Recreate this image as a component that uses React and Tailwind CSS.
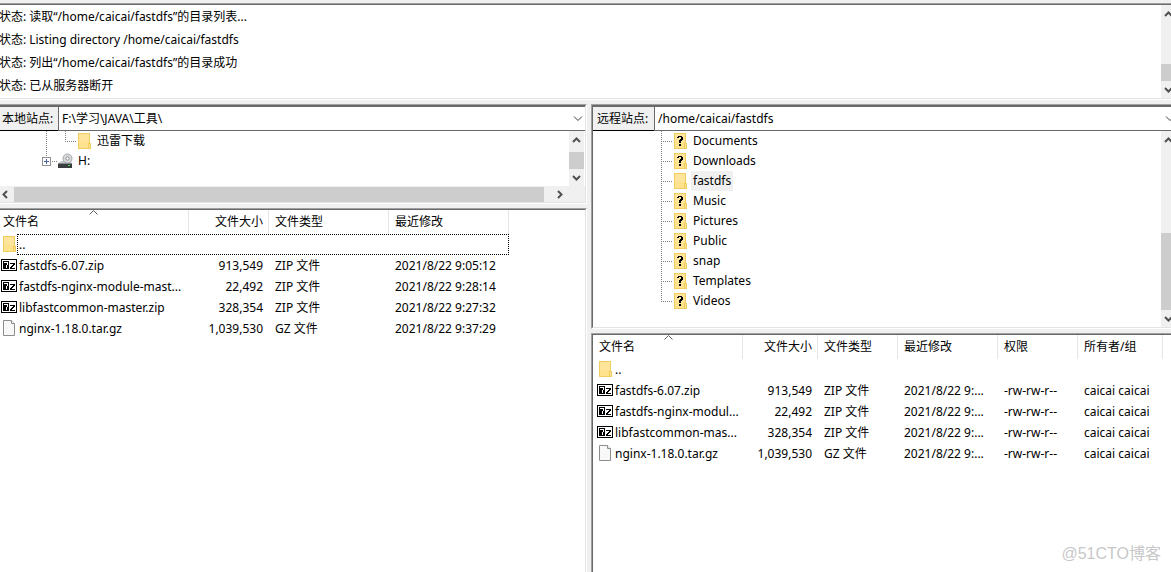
import React from "react";

const Folder = ({ unknown = false, className = "" }) => (
  <svg width="13" height="16" viewBox="0 0 13 16" shapeRendering="crispEdges" className={`shrink-0 ${className}`} aria-hidden="true">
    <rect x="0" y="0" width="12" height="16" fill="#f0cd5c" />
    <rect x="1" y="1" width="10" height="14" fill="#ffe59b" />
    <rect x="1" y="9" width="10" height="6" fill="#ffe28e" />
    <rect x="10" y="10" width="3" height="6" fill="#f0cd5c" />
    <rect x="11" y="11" width="1" height="4" fill="#ffe28e" />
    {unknown && (
      <path d="M4 3h4v1h1v3h-1v1h-1v2h-2v-3h1v-1h1v-2h-2v1h-2v-1h1zM5 11h2v2h-2z" fill="#000" />
    )}
  </svg>
);

const ZipIcon = () => (
  <svg width="16" height="12" viewBox="0 0 16 12" shapeRendering="crispEdges" className="mb-px shrink-0" aria-hidden="true">
    <rect width="16" height="12" fill="#000" />
    <rect x="1" y="1" width="14" height="10" fill="#fff" />
    <rect x="2" y="2" width="6" height="8" fill="#000" />
    <path d="M3 3h4v3h-1v3h-1v-3h1v-2h-3z" fill="#fff" />
    <path d="M9 4h5v2h-1v1h-1v1h-1v1h3v1h-5v-2h1v-1h1v-1h1v-1h-3z" fill="#000" />
  </svg>
);

const FileIcon = () => (
  <svg width="12" height="16" viewBox="0 0 12 16" className="mx-0.5 mb-px shrink-0" aria-hidden="true">
    <path d="M.5.5h8l3 3v12H.5z" fill="#f8f8f8" stroke="#8d8d8d" />
    <path d="M8.5.5v3h3" fill="#fff" stroke="#8d8d8d" />
  </svg>
);

const DriveIcon = () => (
  <svg width="15" height="16" viewBox="0 0 15 16" className="shrink-0" aria-hidden="true">
    <path d="M0 11l3-3h10l1 3z" fill="#c4c6c8" />
    <circle cx="9.500" cy="5.500" r="4.500" fill="#d9dbdd" stroke="#a2a6a9" />
    <circle cx="9.500" cy="5.500" r="1.700" fill="#fff" stroke="#8d9296" />
    <rect x="0" y="11" width="14" height="4" fill="#3b3e41" />
    <rect x="0" y="10" width="14" height="1" fill="#85898c" />
    <rect x="10" y="12" width="2" height="1" fill="#40e050" />
  </svg>
);

const arrows = {
  up: "M1 6l3.500-3.500L8 6",
  down: "M1 3l3.500 3.500L8 3",
  left: "M6 1L2.500 4.500 6 8",
  right: "M3 1l3.500 3.500L3 8",
};

const Arrow = ({ dir }) => (
  <svg width="9" height="9" viewBox="0 0 9 9" className="shrink-0" aria-hidden="true">
    <path d={arrows[dir]} fill="none" stroke="#505050" strokeWidth="2" />
  </svg>
);

const VScroll = ({ thumb, className }) => (
  <div className={`flex shrink-0 flex-col overflow-hidden bg-[#f0f0f0] ${className}`}>
    <button aria-label="Scroll up" className="flex h-[18px] shrink-0 items-center pl-[3px]"><Arrow dir="up" /></button>
    <div className="grow" />
    <div className={`shrink-0 bg-[#cdcdcd] ${thumb}`} />
    <button aria-label="Scroll down" className="flex h-[17px] shrink-0 items-center pl-[3px]"><Arrow dir="down" /></button>
  </div>
);

const frame = "border-t border-b border-t-[#a0a0a0] border-b-white";
const inner = "border-t border-b border-t-[#696969] border-b-[#e3e3e3] bg-white";

const PathBar = ({ id, label, value, labelClass, chevronClass }) => (
  <div className="flex h-[25px] border-t border-[#696969]">
    <label htmlFor={id} className={`flex shrink-0 items-center border-b border-black bg-[#f0f0f0] ${labelClass}`}>{label}</label>
    <div className="relative flex min-w-0 grow border-b border-l border-[#696969]">
      <select id={id} className="w-full appearance-none bg-white px-[3px] outline-none">
        <option>{value}</option>
      </select>
      <svg width="10" height="6" viewBox="0 0 10 6" className={`pointer-events-none absolute top-[9px] ${chevronClass}`} aria-hidden="true">
        <path d="M1 .5l4 4 4-4" fill="none" stroke="#404040" />
      </svg>
    </div>
  </div>
);

const log = [
  "读取“/home/caicai/fastdfs”的目录列表...",
  "Listing directory /home/caicai/fastdfs",
  "列出“/home/caicai/fastdfs”的目录成功",
  "已从服务器断开",
];

const remoteDirs = ["Documents", "Downloads", "fastdfs", "Music", "Pictures", "Public", "snap", "Templates", "Videos"];

const localCols = [
  { label: "文件名", width: "w-[189px]" },
  { label: "文件大小", width: "w-20", right: true },
  { label: "文件类型", width: "w-[120px]" },
  { label: "最近修改", width: "w-[120px]" },
];
const localFiles = [
  ["fastdfs-6.07.zip", "913,549", "ZIP 文件", "2021/8/22 9:05:12"],
  ["fastdfs-nginx-module-mast...", "22,492", "ZIP 文件", "2021/8/22 9:28:14"],
  ["libfastcommon-master.zip", "328,354", "ZIP 文件", "2021/8/22 9:27:32"],
  ["nginx-1.18.0.tar.gz", "1,039,530", "GZ 文件", "2021/8/22 9:37:29"],
];

const remoteCols = [
  { label: "文件名", width: "w-[150px]" },
  { label: "文件大小", width: "w-[75px]", right: true },
  { label: "文件类型", width: "w-20" },
  { label: "最近修改", width: "w-[100px]" },
  { label: "权限", width: "w-20" },
  { label: "所有者/组", width: "w-[85px]" },
];
const remoteFiles = [
  ["fastdfs-6.07.zip", "913,549", "ZIP 文件", "2021/8/22 9:...", "-rw-rw-r--", "caicai caicai"],
  ["fastdfs-nginx-modul...", "22,492", "ZIP 文件", "2021/8/22 9:...", "-rw-rw-r--", "caicai caicai"],
  ["libfastcommon-mas...", "328,354", "ZIP 文件", "2021/8/22 9:...", "-rw-rw-r--", "caicai caicai"],
  ["nginx-1.18.0.tar.gz", "1,039,530", "GZ 文件", "2021/8/22 9:...", "-rw-rw-r--", "caicai caicai"],
];

const FileTable = ({ cols, files, headPad, iconPad, focused, sortClass }) => (
  <table className="table-fixed border-separate border-spacing-0 whitespace-nowrap">
    <thead>
      <tr className="h-6">
        {cols.map((c, i) => (
          <th key={c.label} className={`relative border-r border-[#e5e5e5] p-0 font-normal ${c.width} ${c.right ? "pr-[5px] text-right" : i === 0 ? `text-left ${headPad}` : "pl-1.5 text-left"}`}>
            {c.label}
            {i === 0 && (
              <svg width="9" height="5" viewBox="0 0 9 5" className={`absolute top-0 ${sortClass}`} aria-hidden="true">
                <path d="M.5 4.500l4-4 4 4" fill="none" stroke="#606060" />
              </svg>
            )}
          </th>
        ))}
      </tr>
    </thead>
    <tbody>
      <tr className="h-[21px]">
        <td colSpan={cols.length} className="p-0">
          <div className={`flex h-[21px] items-center ${iconPad}`}>
            <Folder className="mr-px mb-px ml-0.5" />
            <span className={`flex h-[21px] grow items-center border border-dotted pl-px ${focused ? "border-black" : "border-transparent"}`}>..</span>
          </div>
        </td>
      </tr>
      {files.map((f) => (
        <tr key={f[0]} className="h-[21px]">
          {f.map((v, i) => (
            <td key={i} className={`p-0 ${i === 0 ? iconPad : cols[i].right ? "pr-1.5 text-right" : "pl-1.5"}`}>
              {i === 0 ? (
                <div className="flex h-[21px] items-center gap-0.5">
                  {v.endsWith(".gz") ? <FileIcon /> : <ZipIcon />}
                  <span>{v}</span>
                </div>
              ) : v}
            </td>
          ))}
        </tr>
      ))}
    </tbody>
  </table>
);

export default function App() {
  return (
    <div className="relative flex min-h-screen flex-col overflow-hidden bg-[#f0f0f0] pt-[3px] font-['Noto_Sans','Noto_Sans_CJK_SC',sans-serif] text-[12px] leading-4 text-black">
      <section className={frame}>
        <div className={`flex ${inner}`}>
          <ul className="-ml-px h-[93px] grow">
            {log.map((t) => (
              <li key={t} className="flex h-[23px] items-center gap-[3px]">
                <span>状态:</span>
                <span>{t}</span>
              </li>
            ))}
          </ul>
          <VScroll className="w-2.5" thumb="h-[17px]" />
        </div>
      </section>

      <main className="mt-1 grid grow grid-cols-[minmax(0,587fr)_minmax(0,580fr)] gap-1">
        <div className="flex flex-col gap-1">
          <section className={`border-r border-r-white ${frame}`}>
            <div className={`border-r border-r-[#e3e3e3] ${inner}`}>
              <PathBar id="local" label="本地站点:" value="F:\学习\JAVA\工具\" labelClass="w-[58px] pl-0.5" chevronClass="right-0.5" />
              <div className="flex h-[55px]">
                <ul className="grow">
                  <li className="flex h-5 items-center">
                    <svg width="78" height="20" className="shrink-0" shapeRendering="crispEdges" aria-hidden="true">
                      <path d="M46.500 0v20M65.500 0v10M65 10.500h12" stroke="#808080" strokeDasharray="1 1" />
                    </svg>
                    <Folder />
                    <span className="ml-1.5">迅雷下载</span>
                  </li>
                  <li className="flex h-5 items-center">
                    <svg width="58" height="20" className="shrink-0" shapeRendering="crispEdges" aria-hidden="true">
                      <path d="M46.500 0v6M52 10.500h6" stroke="#808080" strokeDasharray="1 1" />
                      <rect x="42.500" y="6.500" width="8" height="8" fill="#fff" stroke="#919191" />
                      <path d="M44 10.500h5M46.500 8v5" stroke="#4b63a7" />
                    </svg>
                    <DriveIcon />
                    <span className="ml-[5px]">H:</span>
                  </li>
                </ul>
                <VScroll className="mr-px w-[15px]" thumb="h-[17px]" />
              </div>
              <div className="flex h-4 items-center bg-[#f0f0f0] pr-5">
                <button aria-label="Scroll left" className="flex w-3.5 pl-px"><Arrow dir="left" /></button>
                <div className="h-[15px] grow bg-[#cdcdcd]" />
                <button aria-label="Scroll right" className="flex w-[21px] justify-center pl-2.5"><Arrow dir="right" /></button>
              </div>
            </div>
          </section>
          <section className="flex grow flex-col border-t border-r border-t-[#a0a0a0] border-r-white">
            <div className="grow border-t border-r border-t-[#696969] border-r-[#e3e3e3] bg-white">
              <FileTable cols={localCols} files={localFiles} headPad="pl-[3px]" iconPad="pl-px" sortClass="left-[89px]" focused />
            </div>
          </section>
        </div>

        <div className="flex flex-col gap-1">
          <section className={`border-l border-l-[#a0a0a0] ${frame}`}>
            <div className={`border-l border-l-[#696969] ${inner}`}>
              <PathBar id="remote" label="远程站点:" value="/home/caicai/fastdfs" labelClass="w-[61px] pl-1" chevronClass="-right-1" />
              <div className="flex h-[196px]">
                <ul className="grow">
                  {remoteDirs.map((d, i) => (
                    <li key={d} className="flex h-5 items-center">
                      <svg width="81" height="20" className="shrink-0" shapeRendering="crispEdges" aria-hidden="true">
                        <path d={i === remoteDirs.length - 1 ? "M68.500 0v10M68 10.500h12" : "M68.500 0v20M68 10.500h12"} stroke="#808080" strokeDasharray="1 1" />
                      </svg>
                      <Folder unknown={d !== "fastdfs"} />
                      <span className={`ml-1 flex h-5 items-center px-0.5 ${d === "fastdfs" ? "bg-[#f0f0f0]" : ""}`}>{d}</span>
                    </li>
                  ))}
                </ul>
                <VScroll className="w-2.5" thumb="h-[77px]" />
              </div>
            </div>
          </section>
          <section className="flex grow flex-col border-t border-l border-[#a0a0a0]">
            <div className="grow overflow-hidden border-t border-l border-[#696969] bg-white">
              <FileTable cols={remoteCols} files={remoteFiles} headPad="pl-1.5" iconPad="pl-1" sortClass="left-[71px]" />
            </div>
          </section>
        </div>
      </main>

      <div className="pointer-events-none absolute right-2.5 bottom-2 font-['Liberation_Sans','Noto_Sans_CJK_SC',sans-serif] text-[16px] leading-5 text-[#c8c8c8]">@51CTO博客</div>
    </div>
  );
}
